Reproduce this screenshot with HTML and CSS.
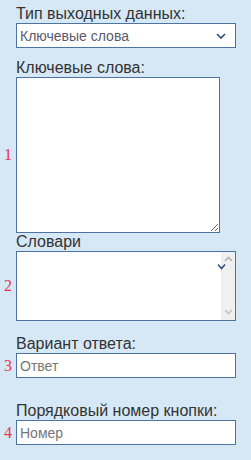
FILE: index.html
```
<html>
<head>
    <title>Параметры вывода</title>
    <link rel="stylesheet" href="styles.css">
</head>
<body>
    <form class="form">
        <label class="field-label">Тип выходных данных:</label>
        <div class="row">
            <span class="num"></span>
            <div class="select">
                <span>Ключевые слова</span>
                <svg width="10" height="6" viewBox="0 0 10 6"><path d="M1 1 L5 5 L9 1" fill="none" stroke="#2c4a78" stroke-width="1.6"/></svg>
            </div>
        </div>

        <label class="field-label gap-sm">Ключевые слова:</label>
        <div class="row">
            <span class="num">1</span>
            <textarea class="keywords"></textarea>
        </div>

        <label class="field-label">Словари</label>
        <div class="row">
            <span class="num">2</span>
            <div class="listbox">
                <svg class="mark" width="9" height="7" viewBox="0 0 9 7"><path d="M1 1.5 L4.5 5.5 L8 1.5" fill="none" stroke="#2c4a78" stroke-width="1.5"/></svg>
                <div class="scrollbar">
                    <svg width="9" height="6" viewBox="0 0 9 6"><path d="M1 5 L4.5 1.5 L8 5" fill="none" stroke="#b4b4b4" stroke-width="1.6"/></svg>
                    <svg width="9" height="6" viewBox="0 0 9 6"><path d="M1 1 L4.5 4.5 L8 1" fill="none" stroke="#c4c4c4" stroke-width="1.6"/></svg>
                </div>
            </div>
        </div>

        <label class="field-label gap-md">Вариант ответа:</label>
        <div class="row">
            <span class="num">3</span>
            <input class="text-input" type="text" placeholder="Ответ">
        </div>

        <label class="field-label gap-lg">Порядковый номер кнопки:</label>
        <div class="row">
            <span class="num">4</span>
            <input class="text-input" type="text" placeholder="Номер">
        </div>
    </form>
</body>
</html>
```
FILE: styles.css
```
body {
    margin: 0;
    background-color: #d6e8f5;
    font-family: "Liberation Sans", Arial, sans-serif;
    color: #333;
}

.form {
    padding-top: 5px;
}

.field-label {
    display: block;
    margin-left: 16px;
    font-size: 16px;
    line-height: 18px;
}

.gap-sm {
    margin-top: 11px;
}

.gap-md {
    margin-top: 14px;
}

.gap-lg {
    margin-top: 24px;
}

.row {
    display: flex;
    align-items: center;
}

.num {
    width: 16px;
    flex: none;
    text-align: center;
    font-family: "Liberation Serif", "Times New Roman", serif;
    font-size: 16px;
    color: #e8344e;
}

.select {
    box-sizing: border-box;
    width: 220px;
    height: 25px;
    padding: 0 9px 0 3px;
    display: flex;
    align-items: center;
    justify-content: space-between;
    border: 1px solid #4d74a0;
    background-color: #fff;
    font-size: 14px;
    color: #5a5a6a;
}

.keywords {
    box-sizing: border-box;
    width: 204px;
    height: 156px;
    margin: 0;
    border: 1px solid #4d74a0;
    background-color: #fff;
    display: block;
}

.listbox {
    position: relative;
    box-sizing: border-box;
    width: 220px;
    height: 70px;
    border: 1px solid #4d74a0;
    background-color: #fff;
    display: flex;
    justify-content: flex-end;
}

.listbox .mark {
    position: absolute;
    left: 200px;
    top: 11px;
}

.scrollbar {
    width: 14px;
    background-color: #f0f0f0;
    display: flex;
    flex-direction: column;
    justify-content: space-between;
    align-items: center;
    padding: 4px 0 5px;
}

.text-input {
    box-sizing: border-box;
    width: 220px;
    height: 25px;
    margin: 0;
    padding: 0 3px;
    border: 1px solid #4d74a0;
    background-color: #fff;
    font-family: "Liberation Sans", Arial, sans-serif;
    font-size: 14px;
    color: #333;
}

.text-input::placeholder {
    color: #777;
}
```
